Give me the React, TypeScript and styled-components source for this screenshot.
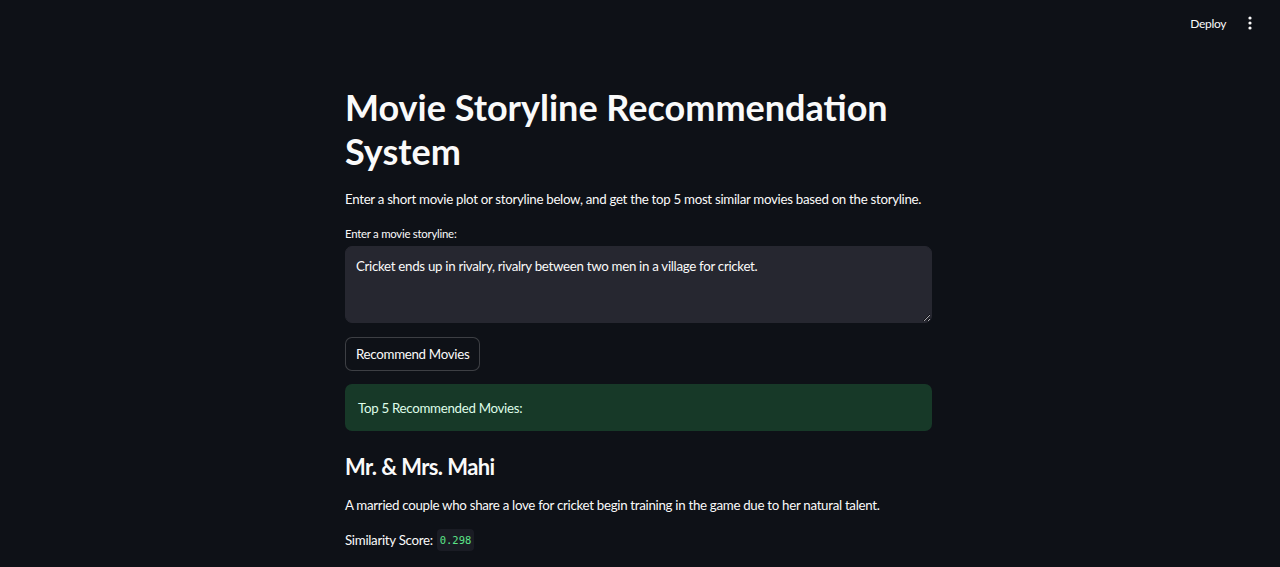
import React from "react";
import styled, { createGlobalStyle } from "styled-components";

const Global = createGlobalStyle`
  html, body { margin: 0; padding: 0; background: #0e1117; }
  body { font-family: "Source Sans Pro", Lato, "Noto Sans", sans-serif; color: #fafafa; }
  * { box-sizing: border-box; }
`;

const Page = styled.div`
  width: 1280px;
  height: 567px;
  overflow: hidden;
  background: #0e1117;
  display: flex;
  flex-direction: column;
`;

const Header = styled.header`
  height: 46px;
  display: flex;
  align-items: center;
  justify-content: flex-end;
  padding-right: 22px;
  gap: 10px;
`;

const DeployButton = styled.button`
  background: transparent;
  border: none;
  color: #fafafa;
  font-family: inherit;
  font-size: 12px;
  letter-spacing: -0.35px;
  padding: 4px 6px;
  cursor: pointer;
`;

const Kebab = styled.button`
  background: transparent;
  border: none;
  padding: 0;
  width: 16px;
  height: 20px;
  display: flex;
  align-items: center;
  justify-content: center;
  cursor: pointer;
`;

const Main = styled.main`
  width: 590px;
  margin: 0 auto;
  padding: 39px 3px 0 0;
  display: flex;
  flex-direction: column;
`;

const Title = styled.h1`
  margin: 0;
  font-size: 36px;
  line-height: 44px;
  font-weight: 700;
  color: #fafafa;
`;

const Para = styled.p<{ $mt?: number }>`
  margin: ${(p) => p.$mt ?? 0}px 0 0;
  font-size: 13.3px;
  line-height: 20px;
  letter-spacing: -0.3px;
  color: #fafafa;
`;

const Label = styled.label`
  margin-top: 17px;
  font-size: 11.4px;
  line-height: 16px;
  letter-spacing: -0.25px;
  color: #fafafa;
`;

const TextArea = styled.textarea`
  margin-top: 4px;
  width: 100%;
  height: 77px;
  background: #262730;
  border: 1px solid #262730;
  border-radius: 7px;
  color: #fafafa;
  font-family: inherit;
  font-size: 13.3px;
  line-height: 20px;
  letter-spacing: -0.3px;
  padding: 9px 10px;
  outline: none;
  resize: vertical;
`;

const Button = styled.button`
  margin-top: 14px;
  align-self: flex-start;
  height: 34px;
  padding: 0 10px;
  background: #0e1117;
  border: 1px solid rgba(250, 250, 250, 0.2);
  border-radius: 7px;
  color: #fafafa;
  font-family: inherit;
  font-size: 13.3px;
  letter-spacing: -0.3px;
  cursor: pointer;
`;

const Success = styled.div`
  margin-top: 13px;
  height: 47px;
  background: #173928;
  border-radius: 7px;
  padding: 0 13px;
  display: flex;
  align-items: center;
  color: #dffde9;
  font-size: 13.3px;
  letter-spacing: -0.3px;
`;

const MovieTitle = styled.h3`
  margin: 22px 0 0;
  font-size: 22px;
  line-height: 28px;
  font-weight: 700;
  letter-spacing: -0.6px;
  color: #fafafa;
`;

const Score = styled.div`
  margin-top: 14px;
  display: flex;
  align-items: center;
  gap: 4px;
  font-size: 13.3px;
  line-height: 20px;
  letter-spacing: -0.3px;
`;

const Code = styled.code`
  font-family: "DejaVu Sans Mono", "Liberation Mono", monospace;
  font-size: 10.5px;
  letter-spacing: 0;
  color: #5ce488;
  background: #1a1c24;
  border-radius: 4px;
  padding: 1px 3px;
`;

export default function App() {
  return (
    <>
      <Global />
      <Page>
        <Header>
          <DeployButton>Deploy</DeployButton>
          <Kebab aria-label="menu">
            <svg width="4" height="14" viewBox="0 0 4 14">
              <circle cx="2" cy="2" r="1.6" fill="#fafafa" />
              <circle cx="2" cy="7" r="1.6" fill="#fafafa" />
              <circle cx="2" cy="12" r="1.6" fill="#fafafa" />
            </svg>
          </Kebab>
        </Header>
        <Main>
          <Title>Movie Storyline Recommendation System</Title>
          <Para $mt={16}>
            Enter a short movie plot or storyline below, and get the top 5 most similar movies based on the storyline.
          </Para>
          <Label>Enter a movie storyline:</Label>
          <TextArea defaultValue="Cricket ends up in rivalry, rivalry between two men in a village for cricket." />
          <Button>Recommend Movies</Button>
          <Success>Top 5 Recommended Movies:</Success>
          <MovieTitle>Mr. &amp; Mrs. Mahi</MovieTitle>
          <Para $mt={14}>
            A married couple who share a love for cricket begin training in the game due to her natural talent.
          </Para>
          <Score>
            <span>Similarity Score:</span>
            <Code>0.298</Code>
          </Score>
        </Main>
      </Page>
    </>
  );
}
